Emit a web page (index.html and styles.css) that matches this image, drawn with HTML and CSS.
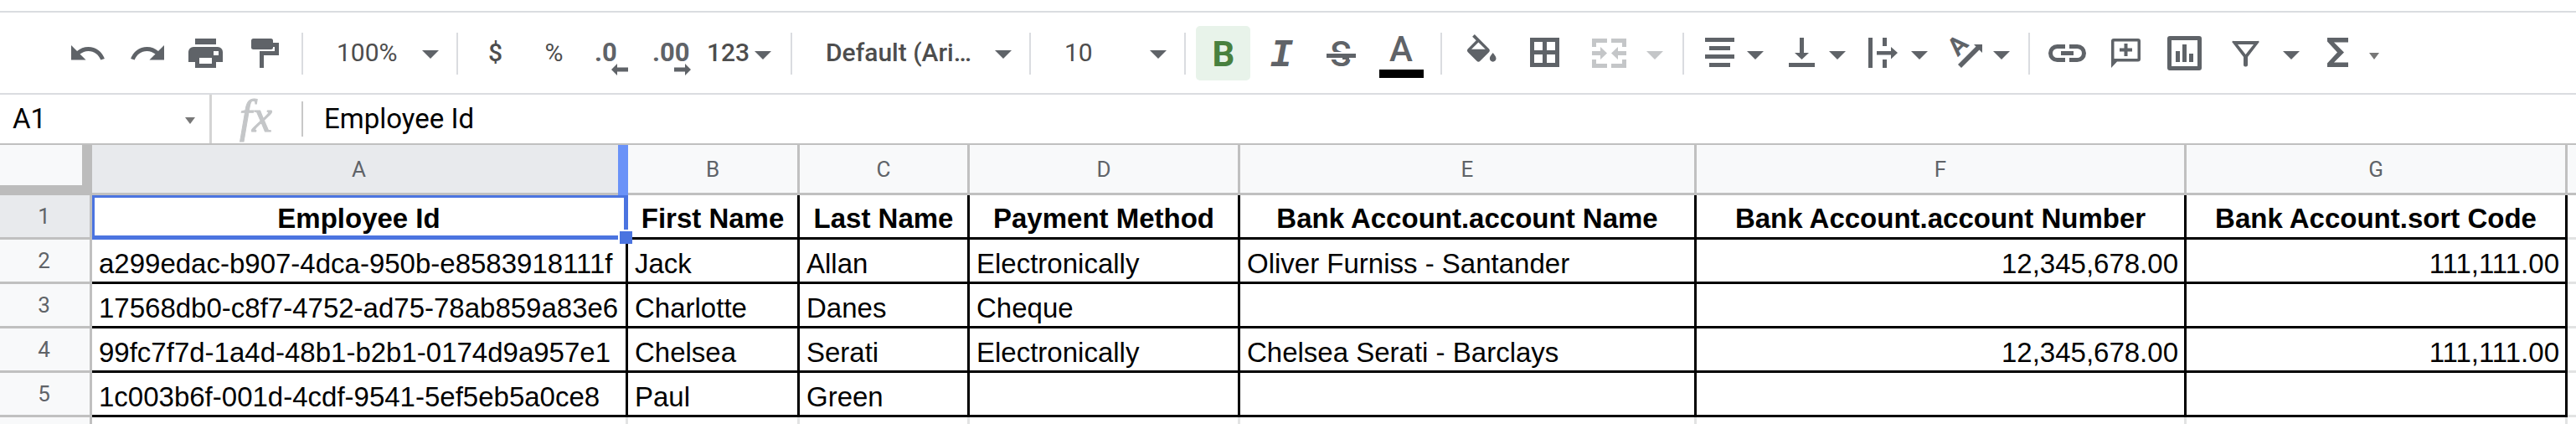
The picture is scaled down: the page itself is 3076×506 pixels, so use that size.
FILE: index.html
```html
<!DOCTYPE html>
<html lang="en">
<head>
    <meta charset="UTF-8">
    <meta name="viewport" content="width=device-width, initial-scale=1">
    <title>Employees</title>
    <link rel="stylesheet" href="styles.css">
</head>
<body>

    <!-- Toolbar -->
    <div class="toolbar">
        <button class="btn" aria-label="Undo">
            <svg class="icon" viewBox="0 0 45 45"><path transform="translate(-1.9 -.6) scale(1.95)" d="M12.5 8c-2.65 0-5.05.99-6.9 2.6L2 7v9h9l-3.62-3.62c1.39-1.16 3.16-1.88 5.12-1.88 3.54 0 6.55 2.31 7.6 5.5l2.37-.78C21.08 11.03 17.15 8 12.5 8z"/></svg>
        </button>
        <button class="btn" aria-label="Redo">
            <svg class="icon" viewBox="0 0 45 45"><path transform="translate(46.9 -.6) scale(-1.95 1.95)" d="M12.5 8c-2.65 0-5.05.99-6.9 2.6L2 7v9h9l-3.62-3.62c1.39-1.16 3.16-1.88 5.12-1.88 3.54 0 6.55 2.31 7.6 5.5l2.37-.78C21.08 11.03 17.15 8 12.5 8z"/></svg>
        </button>
        <button class="btn" aria-label="Print">
            <svg class="icon" viewBox="0 0 45 45"><path fill-rule="evenodd" d="M10 5h25v7H10zM8 15h29a6 6 0 0 1 6 6v12h-8v7H10v-7H2V21a6 6 0 0 1 6-6zM15 28v7h15v-7zM32 20v5h6v-5z"/></svg>
        </button>
        <button class="btn" aria-label="Paint format">
            <svg class="icon" viewBox="0 0 45 45"><rect x="7" y="5" width="26" height="13" rx="2.5"/><path d="M33 10h7v15H22v15h-5V20h18v-5h-2z"/></svg>
        </button>
        <div class="sep"></div>

        <div class="select zoom">
            <select aria-label="Zoom"><option>100%</option></select>
            <span class="caret"></span>
        </div>
        <div class="sep"></div>

        <button class="btn text medium">$</button>
        <button class="btn text">%</button>
        <button class="btn" aria-label="Decrease decimal places">
            <svg class="icon" viewBox="0 0 45 45"><text class="decimal" x="1" y="32">.0</text><path d="M21 42l7-7v4.500h13v5H28V49z"/></svg>
        </button>
        <button class="btn" aria-label="Increase decimal places">
            <svg class="icon" viewBox="0 0 45 45"><text class="decimal" x="0" y="32">.00</text><path d="M46 42l-7-7v4.500H26v5h13V49z"/></svg>
        </button>
        <button class="btn formats"><span class="label">123</span><span class="caret"></span></button>
        <div class="sep"></div>

        <div class="select font">
            <select aria-label="Font"><option>Default (Ari…</option></select>
            <span class="caret"></span>
        </div>
        <div class="sep"></div>

        <div class="select size">
            <select aria-label="Font size"><option>10</option></select>
            <span class="caret"></span>
        </div>
        <div class="sep"></div>

        <button class="btn active" aria-label="Bold">
            <svg class="icon" viewBox="0 0 45 45"><text class="letter bold" x="23" y="38">B</text></svg>
        </button>
        <button class="btn" aria-label="Italic">
            <svg class="icon" viewBox="0 0 45 45"><text class="letter italic" x="22" y="38">I</text></svg>
        </button>
        <button class="btn" aria-label="Strikethrough">
            <svg class="icon" viewBox="0 0 45 45"><text class="letter" x="23" y="38">S</text><path fill="#fff" d="M6 21h35v9H6z"/><path d="M6 23h35v5H6z"/><path d="M25 28h8v2h-8z"/></svg>
        </button>
        <button class="btn wide" aria-label="Text color">
            <svg class="icon" viewBox="0 0 45 45"><text class="letter" x="22" y="32">A</text><path fill="#000" d="M-4 42h53v10H-4z"/></svg>
        </button>
        <div class="sep"></div>

        <button class="btn wide" aria-label="Fill color">
            <svg class="icon" viewBox="0 0 45 45"><path transform="translate(-.8 0) scale(1.92)" d="M16.56 8.94L7.62 0 6.21 1.41l2.38 2.38-5.15 5.15c-.59.59-.59 1.54 0 2.12l5.5 5.5c.29.29.68.44 1.06.44s.77-.15 1.06-.44l5.5-5.5c.59-.58.59-1.53 0-2.12zM5.650 9.250L10 4.900l4.350 4.350zM19 11.500s-2 2.170-2 3.500c0 1.100.9 2 2 2s2-.9 2-2c0-1.330-2-3.500-2-3.500z"/></svg>
        </button>
        <button class="btn wide" aria-label="Borders">
            <svg class="icon" viewBox="0 0 45 45"><path fill-rule="evenodd" d="M5 4h35v35H5zM10 9v10h10V9zM25 9v10h10V9zM10 24v10h10V24zM25 24v10h10V24z"/></svg>
        </button>
        <button class="btn merge" disabled aria-label="Merge cells">
            <svg class="icon" viewBox="0 0 45 45"><path d="M2 5h18v5H7v5H2zM25 5h18v10h-5v-5H25zM2 30h5v5h13v5H2zM38 30h5v10H25v-5h13zM2 20h10v-5l8 7.500-8 7.500v-5H2zM43 20H33v-5l-8 7.500 8 7.500v-5h10z"/></svg>
            <span class="caret"></span>
        </button>
        <div class="sep"></div>

        <button class="btn drop" aria-label="Horizontal align">
            <svg class="icon" viewBox="0 0 45 45"><path d="M5 4h35v5H5zM10 14h25v5H10zM5 24h35v5H5zM10 34h25v5H10z"/></svg>
            <span class="caret"></span>
        </button>
        <button class="btn drop" aria-label="Vertical align">
            <svg class="icon" viewBox="0 0 45 45"><path d="M20 4h5v18h6l-8.500 8-8.500-8h6zM7 34h31v5H7z"/></svg>
            <span class="caret"></span>
        </button>
        <button class="btn drop" aria-label="Text wrapping">
            <svg class="icon" viewBox="0 0 45 45"><path d="M4 4h5v36H4zM21 4h5v10h-5zM21 30h5v10h-5zM14 20h17v-5l8 7-8 7.500v-5H14z"/></svg>
            <span class="caret"></span>
        </button>
        <button class="btn drop" aria-label="Text rotation">
            <svg class="icon" viewBox="0 0 45 45"><text class="turned" x="0" y="0" transform="translate(20 20) rotate(-45)">A</text><path d="M32 12h10v10l-3.500-3.500L17 40l-4-4 21.500-21.500z"/></svg>
            <span class="caret"></span>
        </button>
        <div class="sep"></div>

        <button class="btn" aria-label="Insert link">
            <svg class="icon" viewBox="0 0 45 45"><path fill="none" stroke="#5f6368" stroke-width="5" d="M20 14.500h-9.500a8 8 0 0 0 0 16H20M25 14.500h9.500a8 8 0 0 1 0 16H25M15 22.500h15"/></svg>
        </button>
        <button class="btn" aria-label="Insert comment">
            <svg class="icon" viewBox="0 0 45 45"><path fill-rule="evenodd" d="M8 5h29a3 3 0 0 1 3 3v21.500a3 3 0 0 1-3 3H12L5 40V8a3 3 0 0 1 3-3zM8.500 8.500V29h28V8.500z"/><path d="M20.500 11h4v5.500H30v4h-5.500V26h-4v-5.500H15v-4h5.500z"/></svg>
        </button>
        <button class="btn" aria-label="Insert chart">
            <svg class="icon" viewBox="0 0 45 45"><path fill-rule="evenodd" d="M5 2h35a3 3 0 0 1 3 3v35a3 3 0 0 1-3 3H5a3 3 0 0 1-3-3V5a3 3 0 0 1 3-3zM7 7v31h31V7zM12 20h5v13h-5zM20 12h5v21h-5zM28 23h5v10h-5z"/></svg>
        </button>
        <button class="btn filter" aria-label="Create a filter">
            <svg class="icon" viewBox="0 0 45 45"><path fill-rule="evenodd" d="M8 8h29a1 1 0 0 1 1 2L25 27v9.500a2 2 0 0 1-2 2h-1a2 2 0 0 1-2-2V27L7 10a1 1 0 0 1 1-2zM13 12l9.500 12L32 12z"/></svg>
            <span class="caret"></span>
        </button>
        <button class="btn functions" aria-label="Functions">
            <svg class="icon" viewBox="0 0 45 45"><path d="M10 4h25v5.500H18l12 12-12 12h17V39H10v-4.500l12-13-12-13z"/></svg>
            <span class="caret small"></span>
        </button>
    </div>

    <!-- Name box and formula bar -->
    <div class="formula-bar">
        <div class="name-box">
            <input type="text" aria-label="Name box" value="A1">
            <span class="caret small"></span>
        </div>
        <label class="fx" for="formula">fx</label>
        <input class="formula" id="formula" type="text" value="Employee Id">
    </div>

    <!-- Grid -->
    <table class="grid">
        <colgroup>
            <col class="col-head">
            <col class="col-a">
            <col class="col-b">
            <col class="col-c">
            <col class="col-d">
            <col class="col-e">
            <col class="col-f">
            <col class="col-g">
            <col>
        </colgroup>
        <thead>
            <tr>
                <td class="corner"></td>
                <th class="selected">A<span class="resize"></span></th>
                <th>B</th>
                <th>C</th>
                <th>D</th>
                <th>E</th>
                <th>F</th>
                <th>G</th>
                <th></th>
            </tr>
        </thead>
        <tbody>
            <tr class="titles">
                <th class="selected">1</th>
                <td class="current">Employee Id<span class="outline"></span><span class="handle"></span></td>
                <td>First Name</td>
                <td>Last Name</td>
                <td>Payment Method</td>
                <td>Bank Account.account Name</td>
                <td>Bank Account.account Number</td>
                <td>Bank Account.sort Code</td>
                <td class="empty"></td>
            </tr>
            <tr>
                <th>2</th>
                <td>a299edac-b907-4dca-950b-e8583918111f</td>
                <td>Jack</td>
                <td>Allan</td>
                <td>Electronically</td>
                <td>Oliver Furniss - Santander</td>
                <td class="number">12,345,678.00</td>
                <td class="number">111,111.00</td>
                <td class="empty"></td>
            </tr>
            <tr>
                <th>3</th>
                <td>17568db0-c8f7-4752-ad75-78ab859a83e6</td>
                <td>Charlotte</td>
                <td>Danes</td>
                <td>Cheque</td>
                <td></td>
                <td></td>
                <td></td>
                <td class="empty"></td>
            </tr>
            <tr>
                <th>4</th>
                <td>99fc7f7d-1a4d-48b1-b2b1-0174d9a957e1</td>
                <td>Chelsea</td>
                <td>Serati</td>
                <td>Electronically</td>
                <td>Chelsea Serati - Barclays</td>
                <td class="number">12,345,678.00</td>
                <td class="number">111,111.00</td>
                <td class="empty"></td>
            </tr>
            <tr>
                <th>5</th>
                <td>1c003b6f-001d-4cdf-9541-5ef5eb5a0ce8</td>
                <td>Paul</td>
                <td>Green</td>
                <td></td>
                <td></td>
                <td></td>
                <td></td>
                <td class="empty"></td>
            </tr>
            <tr class="rest">
                <th></th>
                <td class="empty"></td>
                <td class="empty"></td>
                <td class="empty"></td>
                <td class="empty"></td>
                <td class="empty"></td>
                <td class="empty"></td>
                <td class="empty"></td>
                <td class="empty"></td>
            </tr>
        </tbody>
    </table>

</body>
</html>
```

FILE: styles.css
```css
* {
    box-sizing: border-box;
}

body {
    margin: 0;
    padding-top: 13px;
    background-color: #fff;
    font-family: Roboto, sans-serif;
}

button, input, select {
    margin: 0;
    border: none;
    background: none;
    font-family: inherit;
    outline: none;
}

/* Toolbar */
.toolbar {
    display: flex;
    align-items: center;
    gap: 5px;
    padding: 16px 0 15px 73px;
    border-top: 2px solid #dadce0;
    border-bottom: 2px solid #dadce0;
}

.btn {
    display: flex;
    align-items: center;
    justify-content: center;
    flex: none;
    width: 65px;
    height: 65px;
    padding: 0;
    border-radius: 5px;
    color: #4d4d4d;
    font-size: 30px;
}

.btn.text, .label {
    padding-bottom: 3px;
}

.btn.medium {
    font-weight: 500;
}

.btn.active {
    background-color: #e8f3ea;
}

.btn.wide {
    width: 70px;
    padding: 0 12px 0 13px;
}

.btn.formats {
    width: 93px;
    padding-left: 5px;
    gap: 6px;
    justify-content: flex-start;
    font-weight: 500;
}

.btn.drop {
    width: 93px;
    padding-left: 8px;
    gap: 10px;
    justify-content: flex-start;
}

.btn.merge {
    width: 113px;
    padding-left: 15px;
    gap: 22px;
    justify-content: flex-start;
}

.btn.filter {
    width: 109px;
    padding-left: 13px;
    gap: 22px;
    justify-content: flex-start;
}

.btn.functions {
    width: 90px;
    padding-left: 9px;
    gap: 15px;
    justify-content: flex-start;
}

.sep {
    flex: none;
    width: 2px;
    height: 50px;
    margin: 0 7px;
    background-color: #dadce0;
}

.icon {
    flex: none;
    width: 45px;
    height: 45px;
    overflow: visible;
    fill: #5f6368;
}

.merge .icon {
    fill: #c4c6c8;
}

.decimal {
    font-size: 31px;
    font-weight: 700;
}

.letter {
    font-size: 42px;
    font-weight: 500;
    text-anchor: middle;
}

.letter.bold {
    fill: #48803f;
    font-weight: 700;
}

.letter.italic {
    font-family: "Liberation Mono", monospace;
    font-size: 46px;
    font-weight: 700;
    font-style: italic;
}

.turned {
    font-size: 30px;
    font-weight: 700;
    text-anchor: middle;
}

.caret {
    flex: none;
    margin-top: 4px;
    border: 10px solid transparent;
    border-top-color: #5f6368;
    border-bottom: none;
}

.caret.small {
    margin-top: 6px;
    border-width: 8px 6px 0;
    border-top-color: #777;
}

.merge .caret {
    border-top-color: #c4c6c8;
}

/* Dropdowns */
.select {
    position: relative;
    flex: none;
    width: 159px;
}

.select.font {
    width: 259px;
}

.select select {
    appearance: none;
    width: 100%;
    height: 65px;
    padding: 0 36px 3px 28px;
    color: #4d4d4d;
    font-size: 30px;
}

.select.font select {
    font-weight: 500;
}

.select .caret {
    position: absolute;
    right: 9px;
    top: 25px;
    pointer-events: none;
}

/* Formula bar */
.formula-bar {
    display: flex;
    align-items: center;
    height: 60px;
    border-bottom: 2px solid #c0c0c0;
}

.formula-bar input {
    padding: 0 0 2px;
    color: #000;
    font-size: 33px;
}

.name-box {
    display: flex;
    align-items: center;
    width: 253px;
    height: 100%;
    padding: 0 17px 0 15px;
    border-right: 3px solid #d4d4d4;
}

.name-box input {
    flex: 1;
    min-width: 0;
}

.name-box .caret {
    margin-top: 4px;
}

.fx {
    width: 109px;
    height: 42px;
    padding-left: 33px;
    border-right: 2px solid #c8c8c8;
    color: #c4c6c8;
    font-family: "Liberation Serif", serif;
    font-size: 54px;
    font-style: italic;
    line-height: 36px;
    -webkit-text-stroke: 1px #c4c6c8;
}

.formula-bar .formula {
    flex: 1;
    padding-left: 25px;
}

/* Grid */
.grid {
    width: 100%;
    table-layout: fixed;
    border-collapse: separate;
    border-spacing: 0;
}

.col-head { width: 110px; }
.col-a { width: 640px; }
.col-b { width: 205px; }
.col-c { width: 203px; }
.col-d { width: 323px; }
.col-e { width: 545px; }
.col-f { width: 585px; }
.col-g { width: 455px; }

.grid th {
    position: relative;
    height: 53px;
    padding: 0 2px 0 0;
    border-right: 3px solid #c0c0c0;
    border-bottom: 3px solid #c0c0c0;
    background-color: #f8f9fa;
    color: #5f6368;
    font-size: 26px;
    font-weight: 400;
}

.grid thead th {
    height: 60px;
    padding: 0;
}

.grid th.selected {
    background-color: #e8eaed;
}

.grid .corner {
    border-right: 12px solid #bcbcbc;
    border-bottom: 12px solid #bcbcbc;
    background-color: #f8f9fa;
}

.grid td {
    position: relative;
    height: 53px;
    padding: 0 7px 3px 8px;
    border-right: 3px solid #000;
    border-bottom: 3px solid #000;
    font-family: "Liberation Sans", Arial, sans-serif;
    font-size: 33px;
    line-height: 37px;
    vertical-align: bottom;
    white-space: nowrap;
}

.grid .titles td {
    padding: 0 0 4px;
    font-weight: 700;
    text-align: center;
}

.grid .number {
    text-align: right;
}

.grid td.empty {
    padding: 0;
    border-color: #e2e3e3;
}

.grid .rest th, .grid .rest td {
    height: 8px;
    border-bottom: none;
}

.grid tr :last-child:is(th, td) {
    border-right: none;
}

/* Blue bar at the edge of the selected column */
.resize {
    position: absolute;
    top: 0;
    right: -3px;
    bottom: -3px;
    width: 12px;
    background-color: #6a92f8;
}

/* Outline and fill handle of the current cell */
.current {
    z-index: 1;
}

.outline {
    position: absolute;
    top: 0;
    left: 0;
    right: -3px;
    bottom: -3px;
    border: 3px solid #4b74e0;
    border-right-width: 5px;
    border-bottom-width: 5px;
}

.handle {
    position: absolute;
    right: -8px;
    bottom: -8px;
    width: 17px;
    height: 17px;
    border: 2px solid #fff;
    border-right: none;
    border-bottom: none;
    background-color: #4b74e0;
}
```
